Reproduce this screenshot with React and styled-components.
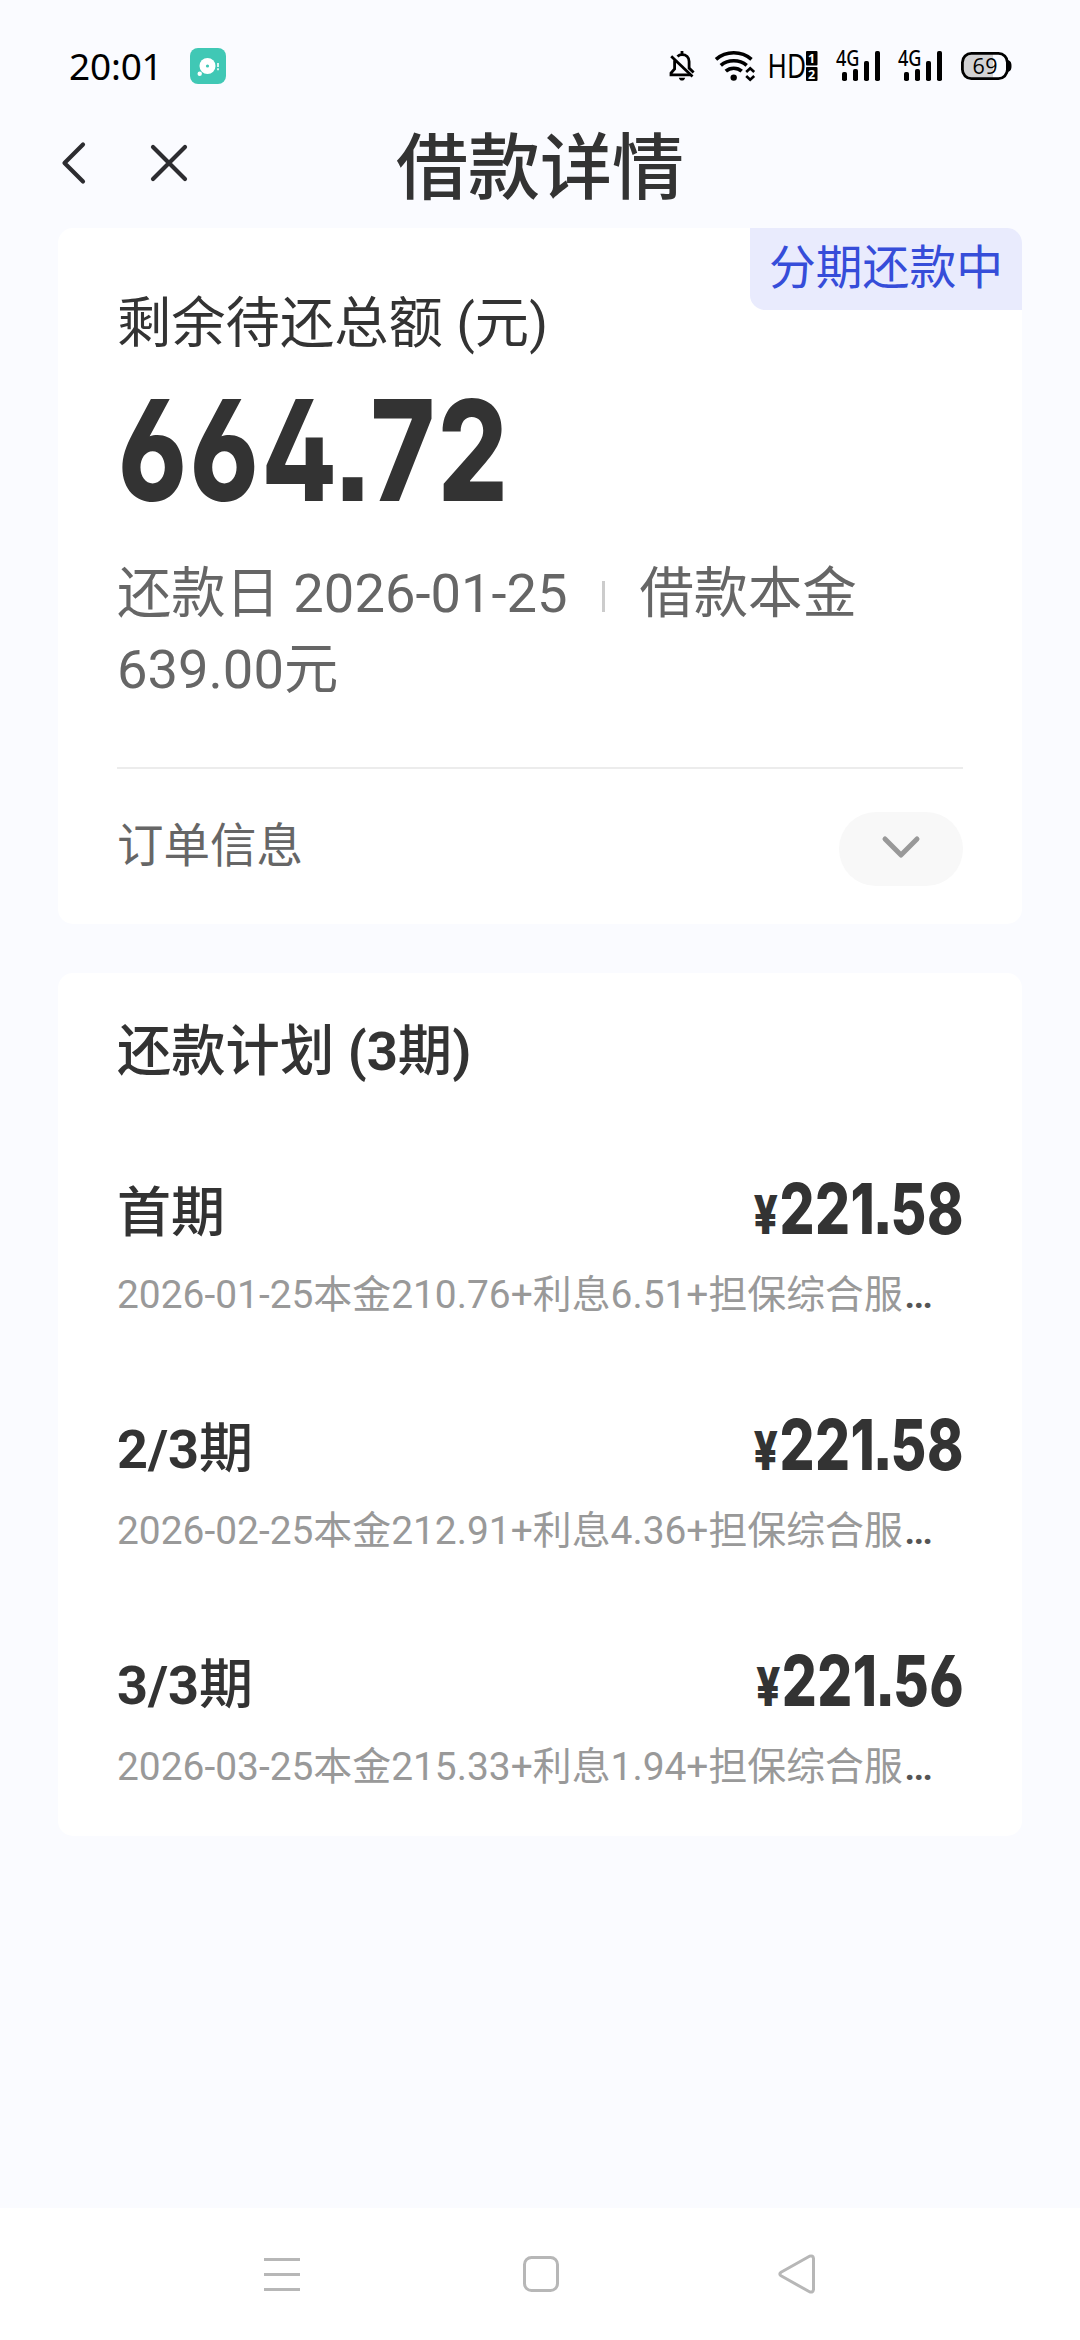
import React from 'react';
import styled, { createGlobalStyle } from 'styled-components';

const Global = createGlobalStyle`
  *, *::before, *::after { box-sizing: border-box; }
  body { margin: 0; background: #fafbff; }
`;

const Screen = styled.div`
  width: 1080px;
  height: 2340px;
  display: flex;
  flex-direction: column;
  overflow: hidden;
  background: #fafbff;
  color: #333;
  font-family: Roboto, 'Noto Sans CJK SC', sans-serif;
`;

const StatusBar = styled.header`
  height: 108px;
  padding: 24px 69px 0 69px;
  display: flex;
  align-items: center;
  justify-content: space-between;
`;

const StatusGroup = styled.div`
  display: flex;
  align-items: center;
  gap: ${(p) => p.$gap}px;
`;

const Clock = styled.time`
  font: 400 37px/44px 'Noto Sans', sans-serif;
  letter-spacing: -0.2px;
  color: #000;
`;

const Icon = styled.svg`
  display: block;
  flex: none;
  overflow: visible;
  margin: ${(p) => p.$margin || '0'};
`;

const TitleBar = styled.nav`
  height: 120px;
  padding: 2px 58px 0;
  display: grid;
  grid-template-columns: 1fr auto 1fr;
  align-items: center;
`;

const NavButtons = styled.div`
  display: flex;
  align-items: center;
  gap: 65px;
  padding: 0 0 12px 3px;
`;

const IconButton = styled.button`
  display: flex;
  align-items: center;
  justify-content: center;
  padding: 0;
  border: 0;
  background: none;
`;

const Title = styled.h1`
  margin: 0;
  font-size: 72px;
  line-height: 100px;
  font-weight: 500;
`;

const Content = styled.main`
  flex: 1;
  padding: 0 58px;
  display: flex;
  flex-direction: column;
  gap: 49px;
`;

const Card = styled.section`
  height: ${(p) => p.$height}px;
  padding: ${(p) => p.$top}px 59px 0 59px;
  border-radius: 15px;
  background: #fff;
  position: relative;
`;

const Badge = styled.span`
  position: absolute;
  top: 0;
  right: 0;
  width: 272px;
  height: 82px;
  border-radius: 0 15px 0 15px;
  background: #e9ebfd;
  color: #364dd9;
  font-size: 46.8px;
  line-height: 80px;
  text-align: center;
`;

const Caption = styled.p`
  margin: 0;
  font-size: 54.3px;
  line-height: 74px;
`;

const Amount = styled.strong`
  display: block;
  width: max-content;
  margin: 29px 0 0 1px;
  font-family: Inter, sans-serif;
  font-feature-settings: 'ss01', 'ss07';
  font-weight: 800;
  font-size: 140px;
  line-height: 120px;
  letter-spacing: 3.6px;
  transform: scaleX(0.784);
  transform-origin: left center;
`;

const Point = styled.span`
  margin-left: ${(p) => p.$before}em;
  margin-right: ${(p) => p.$after}em;
`;

const Facts = styled.p`
  margin: 46px 0 0;
  padding-bottom: 59px;
  border-bottom: 2px solid #ececec;
  color: #666;
  font-size: 54.3px;
  line-height: 76px;
`;

const Separator = styled.span`
  display: inline-block;
  width: 3px;
  height: 31px;
  margin: 0 35px 0 34px;
  background: #ccc;
`;

const OrderRow = styled.div`
  display: flex;
  align-items: flex-start;
  justify-content: space-between;
  margin-top: 43px;
  color: #666;
  font-size: 46.5px;
  line-height: 69px;
`;

const Toggle = styled.button`
  display: flex;
  align-items: center;
  justify-content: center;
  width: 124px;
  height: 74px;
  padding: 0 0 4px;
  border: 0;
  border-radius: 37px;
  background: #f8f8f8;
`;

const PlanTitle = styled.h2`
  margin: 0 0 86px;
  font-size: 54.3px;
  line-height: 76px;
  font-weight: 500;
`;

const Latin = styled.span`
  font-weight: 700;
`;

const Plan = styled.ul`
  display: flex;
  flex-direction: column;
  margin: 0;
  padding: 0;
  list-style: none;
`;

const Item = styled.li`
  height: 236px;
`;

const ItemHead = styled.div`
  display: flex;
  justify-content: space-between;
  height: 76px;
  font-size: 54px;
  line-height: 76px;
  font-weight: 500;
`;

const Price = styled.strong`
  margin-right: -1px;
  font-family: Inter, sans-serif;
  font-feature-settings: 'ss01', 'ss07';
  font-weight: 800;
  font-size: 70px;
  line-height: 65px;
  letter-spacing: 0.6px;
  transform: scaleX(0.785);
  transform-origin: right center;
`;

const Yen = styled.span`
  margin-right: 1px;
  font-size: 54px;
`;

const Detail = styled.p`
  margin: 14px 0 0;
  color: #999;
  font-size: 38.9px;
  line-height: 56px;
  white-space: nowrap;
`;

const Dots = styled.span`
  color: #555;
  font-size: 41px;
  font-weight: 500;
  margin-left: 1px;
`;

const SystemNav = styled.footer`
  height: 132px;
  padding: 0 265px 0 264px;
  display: flex;
  align-items: center;
  justify-content: space-between;
  background: #fff;
`;

const AppBadge = () => (
  <Icon width="36" height="36" viewBox="0 0 36 36">
    <rect width="36" height="36" rx="8" fill="#40c8b5" />
    <circle cx="17.5" cy="18" r="8" fill="#fff" />
    <circle cx="17.5" cy="18" r="1.6" fill="#40c8b5" />
    <circle cx="9.7" cy="25.8" r="2.2" fill="#fff" />
    <path d="M28 15v8" stroke="#fff" strokeWidth="1.6" strokeDasharray="4 1.2 2 1" />
  </Icon>
);

const BellOff = () => (
  <Icon $margin="0 2px 0 0" width="26" height="30" viewBox="0 0 26 30" fill="none" stroke="#000" strokeWidth="2.8">
    <path d="M8.5 5.5C9.8 4.2 11.2 3.600 13 3.600c4.200 0 7.100 3 7.100 7v6.500l4.500 4.500" />
    <path d="M5.600 9.200V18L2 22v1.800h19" />
    <path d="M2.200 5.200 23.500 25.500" />
    <path d="M13 0v4" />
    <path d="M9.800 26.800h6.400c-.6 2-1.700 2.800-3.200 2.800s-2.600-.8-3.200-2.800z" fill="#000" stroke="none" />
  </Icon>
);

const Wifi = () => (
  <Icon $margin="0 -3px 0 0" width="39" height="30" viewBox="0 0 39 30" fill="none" stroke="#000" strokeWidth="3.600">
    <path d="M1 8.300C11-.4 26.500-.4 36.500 8.300" />
    <path d="M5.800 14.400c7.200-6.200 18.700-6.200 25.900 0" />
    <path d="M10.800 20.200c4.400-4 11.500-4 15.900 0" />
    <circle cx="18.700" cy="26.600" r="3.200" fill="#000" stroke="none" />
    <path d="m31.200 21 4-3.800 4 3.800M31.200 25l4 3.800 4-3.800" strokeWidth="2.600" />
  </Icon>
);

const statusFont = { fontFamily: "'Noto Sans', sans-serif" };
const batteryFont = { fontFamily: "'Open Sans', sans-serif" };

const HdVoice = () => (
  <Icon width="49" height="30" viewBox="0 0 49 30">
    <text x="-1.500" y="27" fontSize="33.500" textLength="38.500" lengthAdjust="spacingAndGlyphs" style={statusFont}>HD</text>
    <rect x="37" y="0" width="11.500" height="14.500" rx="1" />
    <rect x="37" y="16" width="11.500" height="14" rx="1" />
    <text x="42.700" y="11.800" fontSize="12.500" fontWeight="700" textAnchor="middle" fill="#fff" style={statusFont}>1</text>
    <text x="42.700" y="27.500" fontSize="12.500" fontWeight="700" textAnchor="middle" fill="#fff" style={statusFont}>2</text>
  </Icon>
);

const Signal = () => (
  <Icon width="44" height="30" viewBox="0 0 44 30">
    <text x="0" y="14.800" fontSize="21" fontWeight="500" textLength="23.500" lengthAdjust="spacingAndGlyphs" style={statusFont}>4G</text>
    <rect x="6" y="21" width="5" height="9" rx="1.800" />
    <rect x="17" y="18" width="5" height="12" rx="1.800" />
    <rect x="28" y="10" width="5" height="20" rx="1.800" />
    <rect x="39" y="0" width="5" height="30" rx="1.800" />
  </Icon>
);

const Battery = () => (
  <Icon $margin="0 0 0 1px" width="50" height="28" viewBox="0 0 50 28">
    <path d="M11 2h21v24H11c-6 0-9-4-9-12S5 2 11 2z" fill="#d2d2d4" />
    <rect x="1.400" y="1.400" width="45" height="25.200" rx="9" fill="none" stroke="#000" strokeWidth="2.800" />
    <path d="M47 8c3 1 3.500 3 3.500 6s-.5 5-3.500 6z" />
    <text x="11.500" y="21.800" fontSize="21.500" textLength="25" style={batteryFont}>69</text>
  </Icon>
);

const plan = [
  { latin: '', label: '首期', yuan: '221', cents: '58', detail: '2026-01-25本金210.76+利息6.51+担保综合服' },
  { latin: '2/3', label: '期', yuan: '221', cents: '58', detail: '2026-02-25本金212.91+利息4.36+担保综合服' },
  { latin: '3/3', label: '期', yuan: '221', cents: '56', detail: '2026-03-25本金215.33+利息1.94+担保综合服' },
];

export default function App() {
  return (
    <Screen>
      <Global />
      <StatusBar>
        <StatusGroup $gap={27}>
          <Clock>20:01</Clock>
          <AppBadge />
        </StatusGroup>
        <StatusGroup $gap={18}>
          <BellOff />
          <Wifi />
          <HdVoice />
          <Signal />
          <Signal />
          <Battery />
        </StatusGroup>
      </StatusBar>

      <TitleBar>
        <NavButtons>
          <IconButton aria-label="返回">
            <Icon width="24" height="42" viewBox="0 0 24 42" fill="none" stroke="#2c2c30" strokeWidth="4.200" strokeLinecap="round" strokeLinejoin="round">
              <path d="M22 2.500 3.500 21 22 39.500" />
            </Icon>
          </IconButton>
          <IconButton aria-label="关闭">
            <Icon width="38" height="38" viewBox="0 0 38 38" fill="none" stroke="#2c2c30" strokeWidth="4.200" strokeLinecap="round">
              <path d="m3 3 32 32M35 3 3 35" />
            </Icon>
          </IconButton>
        </NavButtons>
        <Title>借款详情</Title>
      </TitleBar>

      <Content>
        <Card $height={696} $top={59}>
          <Badge>分期还款中</Badge>
          <Caption>剩余待还总额 (元)</Caption>
          <Amount>
            664<Point $before={-0.06} $after={-0.04}>.</Point>72
          </Amount>
          <Facts>
            还款日 2026-01-25
            <Separator />
            借款本金
            <br />
            639.00元
          </Facts>
          <OrderRow>
            <span>订单信息</span>
            <Toggle aria-label="展开">
              <Icon width="38" height="22" viewBox="0 0 38 22" fill="none" stroke="#999" strokeWidth="5" strokeLinecap="round" strokeLinejoin="round">
                <path d="m3 3 16 16L35 3" />
              </Icon>
            </Toggle>
          </OrderRow>
        </Card>

        <Card $height={863} $top={41}>
          <PlanTitle>
            还款计划 <Latin>(3</Latin>期<Latin>)</Latin>
          </PlanTitle>
          <Plan>
            {plan.map((item) => (
              <Item key={item.detail}>
                <ItemHead>
                  <span>
                    {item.latin && <Latin>{item.latin}</Latin>}
                    {item.label}
                  </span>
                  <Price>
                    <Yen>¥</Yen>
                    {item.yuan}
                    <Point $before={-0.04} $after={-0.04}>.</Point>
                    {item.cents}
                  </Price>
                </ItemHead>
                <Detail>
                  {item.detail}
                  <Dots>…</Dots>
                </Detail>
              </Item>
            ))}
          </Plan>
        </Card>
      </Content>

      <SystemNav>
        <Icon width="36" height="33" viewBox="0 0 36 33" stroke="#b7b7b7" strokeWidth="3">
          <path d="M0 1.500h36M0 16.500h36M0 31.500h36" />
        </Icon>
        <Icon $margin="0 0 0 3px" width="36" height="36" viewBox="0 0 36 36" fill="none" stroke="#b7b7b7" strokeWidth="3">
          <rect x="1.500" y="1.500" width="33" height="33" rx="7" />
        </Icon>
        <Icon width="37" height="40" viewBox="0 0 37 40" fill="none" stroke="#b7b7b7" strokeWidth="3" strokeLinejoin="round">
          <path d="M31.500 2.200 3 18.200q-2.400 1.800 0 3.600l28.500 16q3.500 1.200 4-2.300V4.500q-.5-3.500-4-2.300z" />
        </Icon>
      </SystemNav>
    </Screen>
  );
}
